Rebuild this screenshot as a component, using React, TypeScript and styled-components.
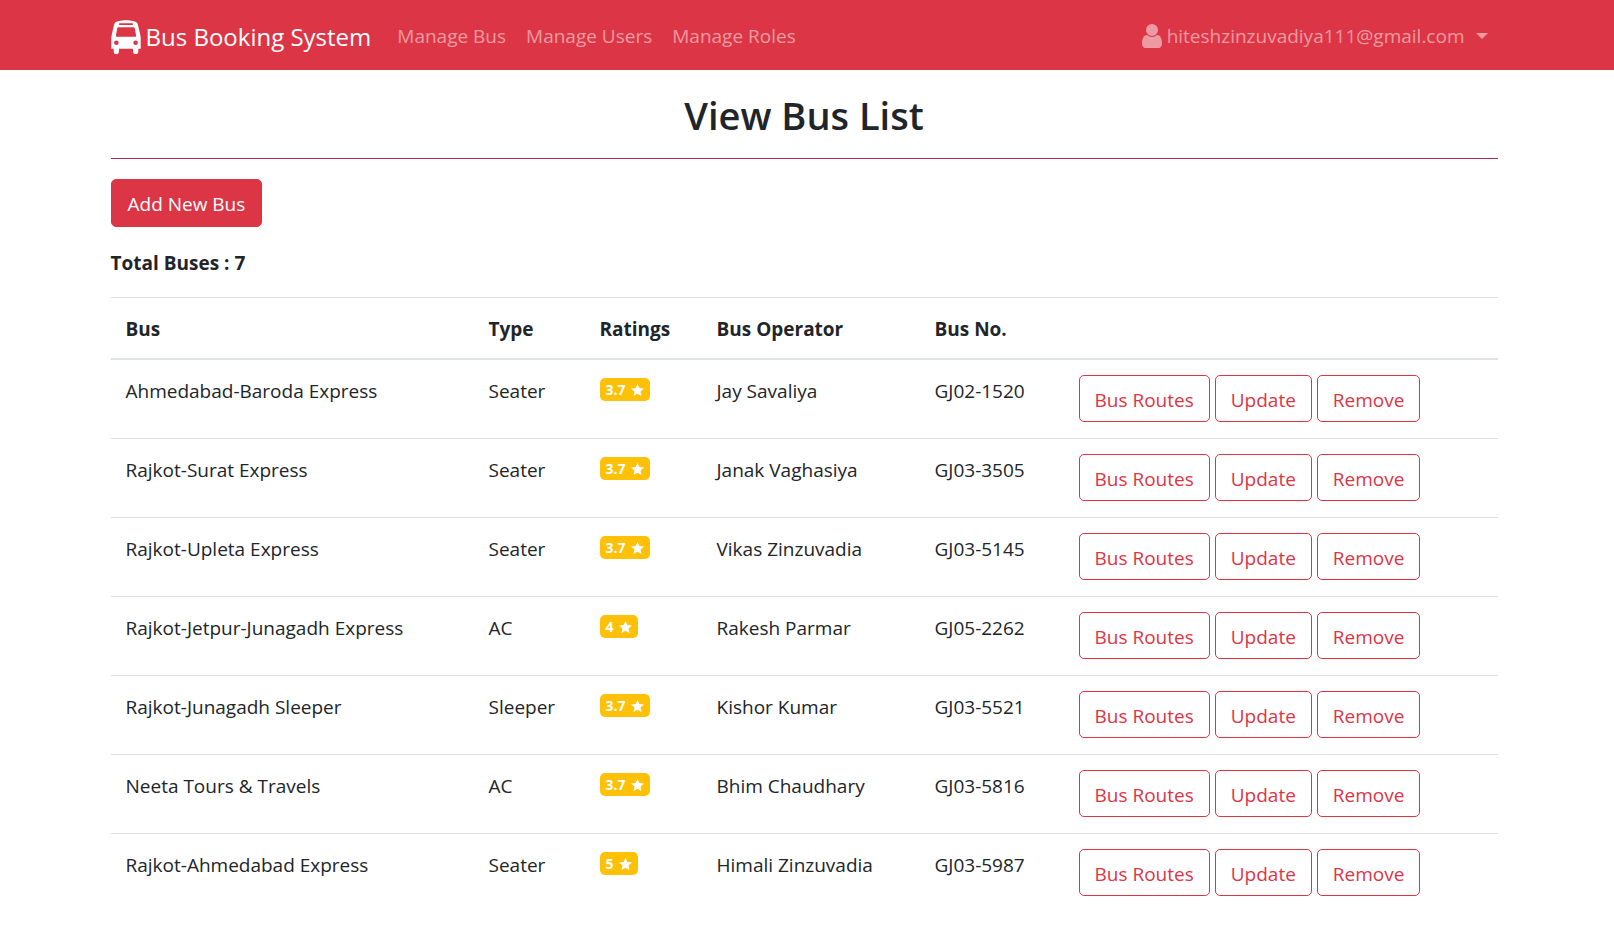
import React from "react";
import styled, { createGlobalStyle } from "styled-components";

const RED = "#dc3545";

const GlobalStyle = createGlobalStyle`
  *, *::before, *::after { box-sizing: border-box; }
  body {
    margin: 0;
    background: #fff;
    color: #212529;
    font-family: "Segoe UI", "Open Sans", "Noto Sans", sans-serif;
    font-size: 19px;
    line-height: 30px;
  }
`;

const Header = styled.header`
  background: ${RED};
  padding-right: 6px;
`;

const Container = styled.div`
  width: 100%;
  max-width: 1427px;
  margin: 0 auto;
  padding: 0 20px;
`;

const Nav = styled(Container).attrs({ as: "nav" })`
  display: flex;
  align-items: center;
  min-height: 70px;
  padding-top: 2px;
`;

const Brand = styled.a`
  display: flex;
  align-items: center;
  gap: 5px;
  margin-right: 16px;
  padding-top: 2px;
  color: #fff;
  font-size: 24px;
  line-height: 38px;
  text-decoration: none;
  white-space: nowrap;
`;

const NavList = styled.ul`
  display: flex;
  flex: 1;
  margin: 0;
  padding: 0;
  list-style: none;
`;

const NavLink = styled.a`
  display: block;
  padding: 10px;
  color: rgba(255, 255, 255, 0.5);
  text-decoration: none;
  white-space: nowrap;
`;

const UserMenu = styled.button`
  display: flex;
  align-items: center;
  gap: 5px;
  padding: 10px;
  border: 0;
  background: none;
  color: rgba(255, 255, 255, 0.5);
  font: inherit;
  cursor: pointer;
`;

const Caret = styled.span`
  margin-left: 6px;
  border-top: 6px solid;
  border-right: 6px solid transparent;
  border-left: 6px solid transparent;
`;

const Page = styled.main`
  padding-right: 6px;
`;

const Title = styled.h1`
  margin: 0;
  padding: 20px 0 18px;
  border-bottom: 1px solid #a8324a;
  font-size: 38px;
  font-weight: 600;
  line-height: 50px;
  text-align: center;
`;

const Button = styled.button<{ $solid?: boolean }>`
  height: ${(p) => (p.$solid ? 48 : 47)}px;
  padding: 2px ${(p) => (p.$solid ? 16 : 15)}px 0;
  border: 1px solid ${RED};
  border-radius: 5px;
  background: ${(p) => (p.$solid ? RED : "transparent")};
  color: ${(p) => (p.$solid ? "#fff" : RED)};
  font: inherit;
  white-space: nowrap;
  cursor: pointer;
`;

const Toolbar = styled.div`
  display: flex;
  padding: 20px 0 21px;
`;

const Total = styled.p`
  margin: 0 0 19px;
  font-weight: 700;
`;

const Table = styled.table`
  width: 100%;
  table-layout: fixed;
  border-spacing: 0;
`;

const Col = styled.col<{ $width?: number }>`
  width: ${(p) => (p.$width ? `${p.$width}px` : "auto")};
`;

const HeadCell = styled.th`
  padding: 16px 15px 14px;
  border-top: 1px solid #dee2e6;
  border-bottom: 2px solid #dee2e6;
  text-align: left;
`;

const Cell = styled.td`
  height: 78px;
  padding: 16px 15px 14px;
  vertical-align: top;
  white-space: nowrap;
`;

const ActionCell = styled(Cell)`
  padding-top: 15px;
`;

const Row = styled.tr`
  & + & > td {
    height: 79px;
    border-top: 1px solid #dee2e6;
  }
`;

const Badge = styled.span`
  display: flex;
  align-items: center;
  gap: 5px;
  width: fit-content;
  height: 23px;
  margin-top: 2px;
  padding: 0 6px;
  border-radius: 5px;
  background: #ffc107;
  color: #fff;
  font-size: 14px;
  font-weight: 700;
`;

const Actions = styled.div`
  display: flex;
  gap: 5px;
`;

const BusIcon = () => (
  <svg width="30" height="34" viewBox="0 0 30 34" fill="currentColor" aria-hidden="true">
    <path
      fillRule="evenodd"
      d="M15 .2c5 0 9.600 1 11 2.600.6.700.8 1.500 1 2.300l2.200 9.400c.3 1.300.5 2.500.5 3.800v10.500H27.300v2.600a2.600 2.600 0 0 1-5.200 0v-2.600H7.900v2.600a2.600 2.600 0 0 1-5.200 0v-2.600H.3V18.300c0-1.300.2-2.500.5-3.800L3 5.100c.2-.8.4-1.600 1-2.300C5.400 1.200 10 .2 15 .2zM8.800 3.200a.9.900 0 0 0 0 1.800h12.400a.9.900 0 0 0 0-1.800zM7.400 7.200c-.6 0-1 .4-1.100.9L4.900 15.400c-.1.700.3 1.300 1 1.300h18.200c.7 0 1.100-.6 1-1.300L23.700 8.100c-.1-.5-.5-.9-1.100-.9zM5.400 20.400a2.300 2.300 0 1 0 0 4.600 2.300 2.300 0 0 0 0-4.600zM24.600 20.400a2.300 2.300 0 1 0 0 4.600 2.300 2.300 0 0 0 0-4.600z"
    />
  </svg>
);

const UserIcon = () => (
  <svg width="20" height="24" viewBox="256 128 1280 1536" fill="currentColor" aria-hidden="true">
    <path d="M1536 1399q0 109-62.500 187t-150.500 78h-854q-88 0-150.500-78t-62.500-187q0-85 8.500-160.500t31.500-152 58.500-131 94-89 134.500-34.500q131 128 313 128t313-128q76 0 134.500 34.500t94 89 58.500 131 31.500 152 8.500 160.500zm-256-887q0 159-112.500 271.500t-271.500 112.500-271.500-112.500-112.500-271.500 112.500-271.500 271.500-112.500 271.500 112.500 112.500 271.500z" />
  </svg>
);

const StarIcon = () => (
  <svg width="13" height="12" viewBox="0 0 26 24" fill="currentColor" role="img" aria-label="stars">
    <path d="M13 0l3.700 8.200 9.300.9-7 6.100 2 8.800-8-4.600-8 4.600 2-8.800-7-6.100 9.300-.9z" />
  </svg>
);

const links = ["Manage Bus", "Manage Users", "Manage Roles"];
const columns = [
  { label: "Bus", width: 363 },
  { label: "Type", width: 111 },
  { label: "Ratings", width: 117 },
  { label: "Bus Operator", width: 218 },
  { label: "Bus No.", width: 144 },
];
const buses = [
  { name: "Ahmedabad-Baroda Express", type: "Seater", rating: 3.7, operator: "Jay Savaliya", no: "GJ02-1520" },
  { name: "Rajkot-Surat Express", type: "Seater", rating: 3.7, operator: "Janak Vaghasiya", no: "GJ03-3505" },
  { name: "Rajkot-Upleta Express", type: "Seater", rating: 3.7, operator: "Vikas Zinzuvadia", no: "GJ03-5145" },
  { name: "Rajkot-Jetpur-Junagadh Express", type: "AC", rating: 4, operator: "Rakesh Parmar", no: "GJ05-2262" },
  { name: "Rajkot-Junagadh Sleeper", type: "Sleeper", rating: 3.7, operator: "Kishor Kumar", no: "GJ03-5521" },
  { name: "Neeta Tours & Travels", type: "AC", rating: 3.7, operator: "Bhim Chaudhary", no: "GJ03-5816" },
  { name: "Rajkot-Ahmedabad Express", type: "Seater", rating: 5, operator: "Himali Zinzuvadia", no: "GJ03-5987" },
];

export default function App() {
  return (
    <>
      <GlobalStyle />
      <Header>
        <Nav>
          <Brand href="#home"><BusIcon />Bus Booking System</Brand>
          <NavList>
            {links.map((l) => (
              <li key={l}><NavLink href="#manage">{l}</NavLink></li>
            ))}
          </NavList>
          <UserMenu type="button"><UserIcon />hiteshzinzuvadiya111@gmail.com<Caret /></UserMenu>
        </Nav>
      </Header>
      <Page>
        <Container>
          <Title>View Bus List</Title>
          <Toolbar><Button type="button" $solid>Add New Bus</Button></Toolbar>
          <Total>Total Buses : {buses.length}</Total>
          <Table>
            <colgroup>
              {columns.map((c) => <Col key={c.label} $width={c.width} />)}
              <Col />
            </colgroup>
            <thead>
              <tr>
                {columns.map((c) => <HeadCell key={c.label} scope="col">{c.label}</HeadCell>)}
                <HeadCell as="td" />
              </tr>
            </thead>
            <tbody>
              {buses.map((b) => (
                <Row key={b.no}>
                  <Cell>{b.name}</Cell>
                  <Cell>{b.type}</Cell>
                  <Cell><Badge>{b.rating}<StarIcon /></Badge></Cell>
                  <Cell>{b.operator}</Cell>
                  <Cell>{b.no}</Cell>
                  <ActionCell>
                    <Actions>
                      <Button type="button">Bus Routes</Button>
                      <Button type="button">Update</Button>
                      <Button type="button">Remove</Button>
                    </Actions>
                  </ActionCell>
                </Row>
              ))}
            </tbody>
          </Table>
        </Container>
      </Page>
    </>
  );
}
